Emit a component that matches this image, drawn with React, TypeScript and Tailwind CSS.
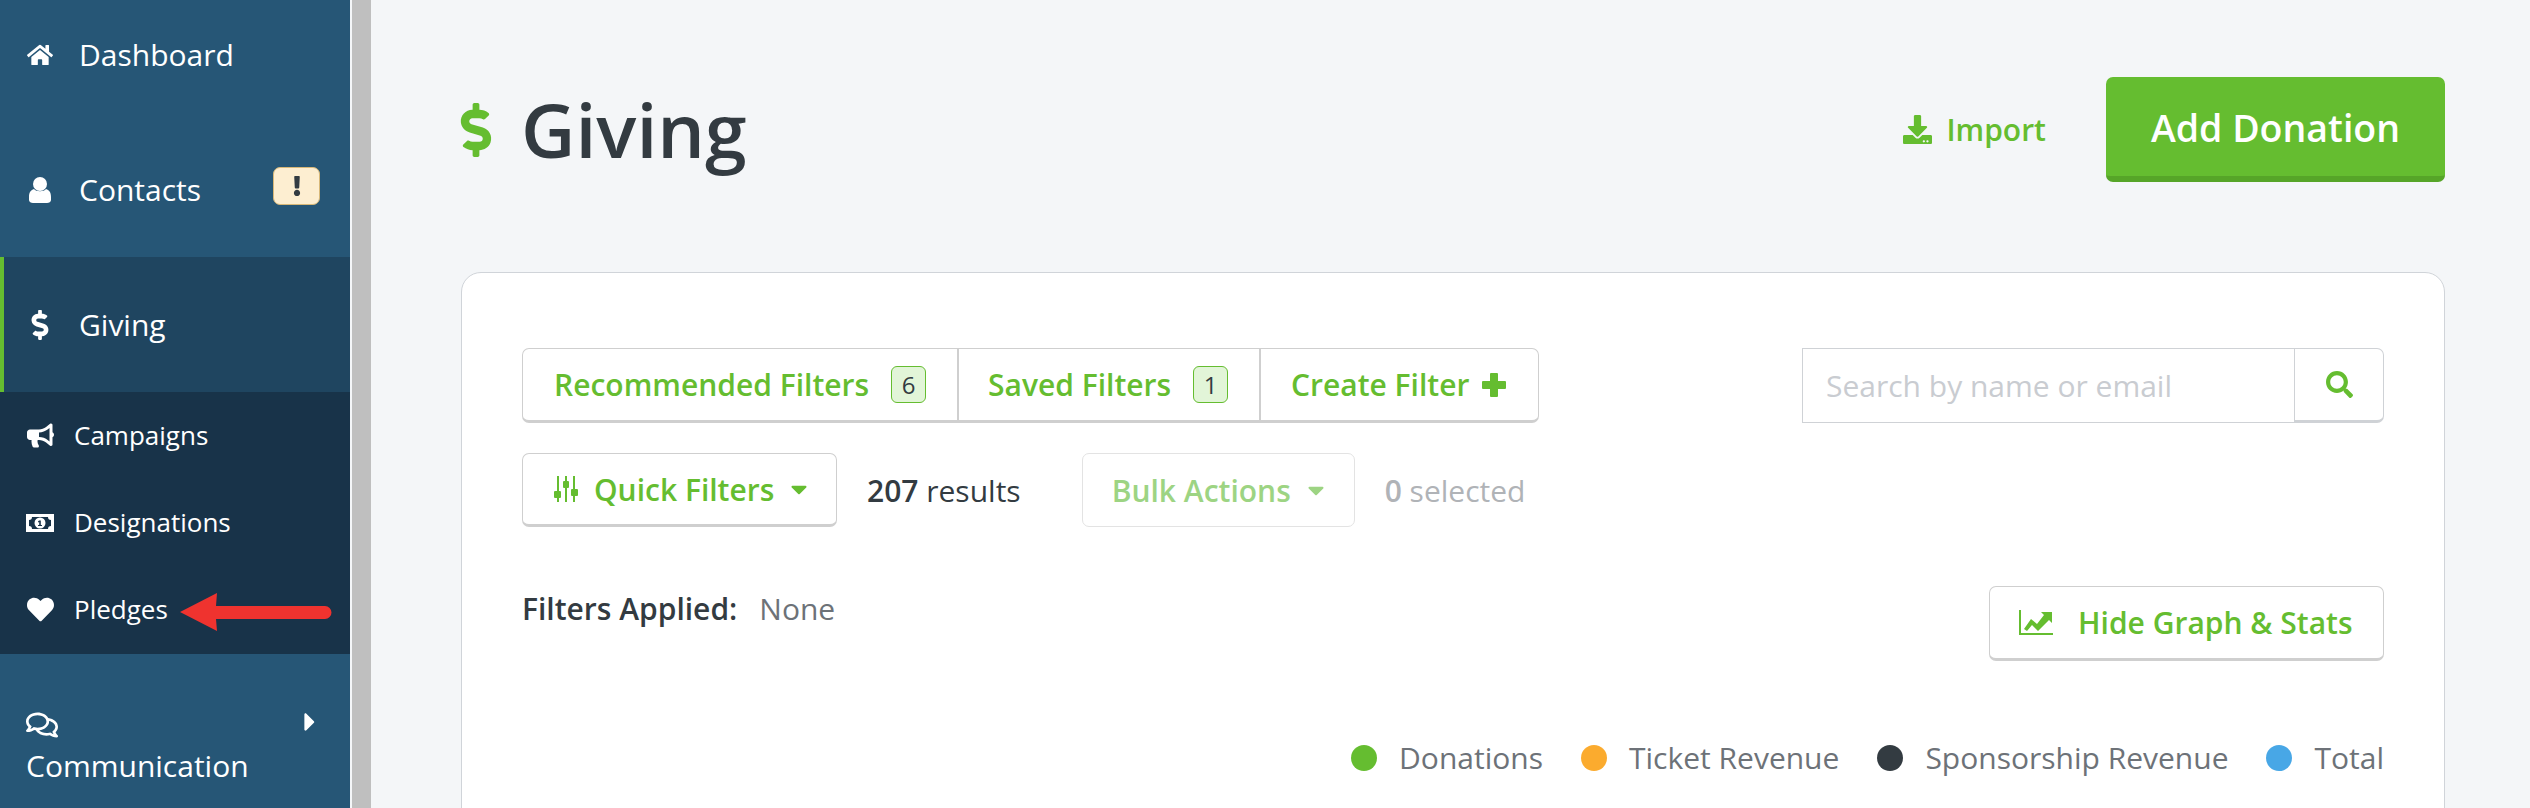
import { FaBullhorn, FaCaretDown, FaCaretRight, FaDollarSign, FaDownload, FaExclamation, FaHeart, FaHome, FaRegComments, FaSearch } from "react-icons/fa";
import type { ReactNode } from "react";

const font = "font-['Open_Sans',sans-serif]";

function NavRow({ icon, label, badge }: { icon: ReactNode; label: string; badge?: boolean }) {
  return (
    <div className="relative h-[135px] flex items-center pl-[26px] text-white">
      <span className="w-[28px] flex justify-center text-[26px]">{icon}</span>
      <span className="ml-[25px] text-[30px]">{label}</span>
      {badge && (
        <span className="absolute right-[30px] top-[45px] w-[47px] h-[38px] flex items-center justify-center rounded-[7px] bg-[#fdeed1] border border-[#d8b878] text-[#333b41] text-[20px]">
          <FaExclamation />
        </span>
      )}
    </div>
  );
}

function SubRow({ icon, label }: { icon: ReactNode; label: string }) {
  return (
    <div className="h-[87px] flex items-center pl-[26px] text-white">
      <span className="w-[28px] flex justify-center text-[27px]">{icon}</span>
      <span className="ml-[20px] text-[26px]">{label}</span>
    </div>
  );
}

function Count({ n }: { n: string }) {
  return (
    <span className="ml-[22px] w-[35px] h-[37px] flex items-center justify-center rounded-[6px] bg-[#e2f5d8] border border-[#65bd30] text-[#333b41] text-[24px] font-normal">
      {n}
    </span>
  );
}

function UserIcon() {
  return (
    <svg width="22" height="26" viewBox="0 0 22 26" fill="currentColor">
      <circle cx="11" cy="7" r="7" />
      <path d="M5 12 C7 15 15 15 17 12 C20 13 22 15 22 20 V23 C22 25 20 26 18 26 H4 C2 26 0 25 0 23 V20 C0 15 2 13 5 12 Z" />
    </svg>
  );
}

function MoneyIcon() {
  return (
    <svg width="28" height="18" viewBox="0 0 28 18">
      <rect width="28" height="18" fill="#fff" />
      <path d="M6 3 H22 C22 5 23 6 25 6 V12 C23 12 22 13 22 15 H6 C6 13 5 12 3 12 V6 C5 6 6 5 6 3 Z" fill="#183349" />
      <circle cx="14" cy="9" r="5.5" fill="#fff" />
      <path d="M13 6.5 h1.8 v4.5 h1.2 v1 h-4 v-1 h1.2 v-3 l-1.2 .5 v-1 z" fill="#183349" />
    </svg>
  );
}

function PlusIcon() {
  return (
    <svg className="ml-[13px]" width="24" height="24" viewBox="0 0 24 24" fill="currentColor">
      <path d="M8 1 a1 1 0 0 1 1 -1 h6 a1 1 0 0 1 1 1 v7 h7 a1 1 0 0 1 1 1 v6 a1 1 0 0 1 -1 1 h-7 v7 a1 1 0 0 1 -1 1 h-6 a1 1 0 0 1 -1 -1 v-7 h-7 a1 1 0 0 1 -1 -1 v-6 a1 1 0 0 1 1 -1 h7 z" />
    </svg>
  );
}

function Slider() {
  return (
    <svg width="24" height="26" viewBox="0 0 24 26" fill="currentColor">
      <rect x="3" y="0" width="2" height="26" />
      <rect x="0" y="15" width="7" height="7" rx="1" />
      <rect x="11" y="0" width="2" height="26" />
      <rect x="9" y="5" width="6" height="7" rx="1" />
      <rect x="19" y="0" width="2" height="26" />
      <rect x="17" y="13" width="7" height="7" rx="1" />
    </svg>
  );
}

function ChartIcon() {
  return (
    <svg width="34" height="25" viewBox="0 0 34 25" fill="currentColor">
      <path d="M0 0 h2 v23 h32 v2 h-34 z" />
      <path d="M5 19 L12 9 L18 14 L25 5 L22 2 H33 V13 L30 10 L19 21 L13 15 L8 21 Z" />
    </svg>
  );
}

function Legend({ color, label }: { color: string; label: string }) {
  return (
    <div className="flex items-center gap-[22px]">
      <span className={`w-[26px] h-[26px] rounded-full ${color}`} />
      <span className="text-[30px] text-[#6d7278]">{label}</span>
    </div>
  );
}

export default function App() {
  return (
    <div className={`${font} w-[2530px] h-[808px] overflow-hidden flex bg-[#f4f6f8]`}>
      <aside className="w-[350px] shrink-0 bg-[#265676]">
        <div className="-mt-[13px]">
          <NavRow icon={<FaHome />} label="Dashboard" />
          <NavRow icon={<UserIcon />} label="Contacts" badge />
        </div>
        <div className="border-l-[4px] border-[#65bd30] bg-[#1f4560]">
          <div className="h-[135px] flex items-center pl-[22px] text-white">
            <span className="w-[28px] flex justify-center text-[30px]"><FaDollarSign /></span>
            <span className="ml-[25px] text-[30px]">Giving</span>
          </div>
        </div>
        <div className="bg-[#183349] h-[262px]">
          <SubRow icon={<FaBullhorn />} label="Campaigns" />
          <SubRow icon={<MoneyIcon />} label="Designations" />
          <div className="relative">
            <SubRow icon={<FaHeart />} label="Pledges" />
            <svg className="absolute left-[180px] top-[27px]" width="152" height="38" viewBox="0 0 152 38" fill="#ef332f">
              <path d="M0 19 L37 0 L36 13 H145 a6 6 0 0 1 0 13 H36 L37 38 Z" />
            </svg>
          </div>
        </div>
        <div className="relative pt-[55px] pl-[26px] text-white">
          <FaRegComments className="text-[32px]" />
          <FaCaretRight className="absolute right-[25px] top-[53px] text-[30px]" />
          <div className="text-[30px] mt-[2px]">Communication</div>
        </div>
      </aside>

      <div className="w-[19px] shrink-0 ml-[2px] bg-[#bfbfbf]" />

      <main className="flex-1 pl-[90px] pr-[85px]">
        <header className="h-[272px] flex items-start justify-between pt-[77px]">
          <div className="flex items-center h-[105px]">
            <FaDollarSign className="text-[54px] text-[#65bd30] -ml-[12px]" />
            <h1 className="ml-[18px] text-[75px] font-semibold text-[#333b41]">Giving</h1>
          </div>
          <div className="flex items-center">
            <FaDownload className="text-[29px] text-[#65bd30]" />
            <span className="ml-[14px] text-[30px] font-semibold text-[#65bd30]">Import</span>
            <button className="ml-[60px] w-[339px] h-[105px] pt-[4px] rounded-[7px] bg-[#65bd30] border-b-[6px] border-[#56a528] text-white text-[37.5px] font-semibold">
              Add Donation
            </button>
          </div>
        </header>

        <section className="bg-white border border-[#d0d4d9] rounded-t-[20px] h-[600px] pt-[75px] px-[60px]">
          <div className="flex justify-between">
            <div className="flex h-[75px] rounded-[7px] border border-[#cfcfcf] border-b-[3px] text-[#65bd30] text-[30px] font-semibold">
              <div className="w-[434px] flex items-center pl-[31px]">Recommended Filters<Count n="6" /></div>
              <div className="w-[302px] flex items-center pl-[29px] border-l-2 border-[#cfcfcf]">Saved Filters<Count n="1" /></div>
              <div className="w-[279px] flex items-center pl-[30px] border-l-2 border-[#cfcfcf]">Create Filter<PlusIcon /></div>
            </div>
            <div className="flex w-[582px] h-[75px]">
              <div className="flex-1 flex items-center pl-[23px] border border-r-0 border-[#cfd2d6] text-[30px] text-[#c9ccd1]">Search by name or email</div>
              <div className="w-[90px] flex items-center justify-center rounded-r-[7px] border border-[#cfd2d6] border-b-[3px] text-[#65bd30] text-[27px]"><FaSearch /></div>
            </div>
          </div>

          <div className="mt-[30px] flex items-center text-[30px]">
            <div className="w-[315px] h-[74px] flex items-center pl-[31px] rounded-[7px] border border-[#cfcfcf] border-b-[3px] text-[#65bd30] font-semibold">
              <Slider />
              <span className="ml-[16px]">Quick Filters</span>
              <FaCaretDown className="ml-[12px] text-[26px]" />
            </div>
            <span className="ml-[30px] text-[#333b41]"><b className="font-semibold">207</b> results</span>
            <div className="ml-[61px] w-[273px] h-[74px] flex items-center pl-[29px] rounded-[7px] border border-[#e3e3e3] text-[#9dd483] font-semibold">
              Bulk Actions
              <FaCaretDown className="ml-[12px] text-[26px]" />
            </div>
            <span className="ml-[30px] text-[#b0b3b7]"><b className="font-semibold">0</b> selected</span>
          </div>

          <div className="mt-[59px] flex items-start justify-between text-[30px]">
            <div>
              <span className="font-semibold text-[#333b41]">Filters Applied:</span>
              <span className="ml-[22px] text-[#6d7278]">None</span>
            </div>
            <div className="w-[395px] h-[75px] flex items-center pl-[29px] rounded-[7px] border border-[#cfcfcf] border-b-[3px] text-[#65bd30] font-semibold">
              <ChartIcon />
              <span className="ml-[25px]">Hide Graph &amp; Stats</span>
            </div>
          </div>

          <div className="mt-[74px] flex justify-end gap-[38px]">
            <Legend color="bg-[#65bd30]" label="Donations" />
            <Legend color="bg-[#fbab2e]" label="Ticket Revenue" />
            <Legend color="bg-[#333b41]" label="Sponsorship Revenue" />
            <Legend color="bg-[#48a7e6]" label="Total" />
          </div>
        </section>
      </main>
    </div>
  );
}
